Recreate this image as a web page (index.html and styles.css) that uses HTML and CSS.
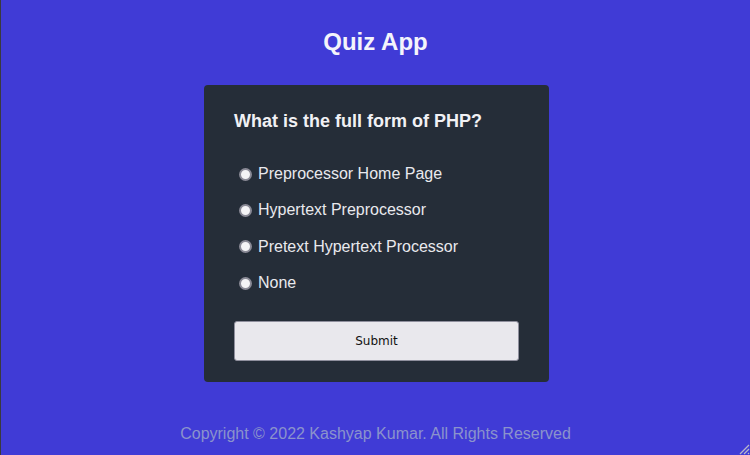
FILE: index.html
```html
<!DOCTYPE html>
<html>
<head>
<meta charset="utf-8">
<link rel="stylesheet" href="styles.css">
</head>
<body>
<div class="page">
  <h1 class="title">Quiz App</h1>
  <div class="card">
    <h2 class="question">What is the full form of PHP?</h2>
    <div class="options">
      <label class="option"><input type="radio" name="a"> Preprocessor Home Page</label>
      <label class="option"><input type="radio" name="a"> Hypertext Preprocessor</label>
      <label class="option"><input type="radio" name="a"> Pretext Hypertext Processor</label>
      <label class="option"><input type="radio" name="a"> None</label>
    </div>
    <button class="submit">Submit</button>
  </div>
  <footer class="footer">Copyright © 2022 Kashyap Kumar. All Rights Reserved</footer>
  <svg class="grip" width="12" height="12" viewBox="0 0 12 12">
    <line x1="11" y1="2" x2="2" y2="11" stroke="#b8b8c8" stroke-width="1.2"/>
    <line x1="11" y1="6" x2="6" y2="11" stroke="#b8b8c8" stroke-width="1.2"/>
    <line x1="11" y1="10" x2="10" y2="11" stroke="#b8b8c8" stroke-width="1.2"/>
  </svg>
</div>
</body>
</html>
```
FILE: styles.css
```css
html, body {
  margin: 0;
  padding: 0;
}
body {
  background: #403bd6;
  font-family: "Liberation Sans", Arial, sans-serif;
}
.page {
  position: relative;
  box-sizing: border-box;
  height: 455px;
  border-left: 1px solid #3a3a3e;
  display: flex;
  flex-direction: column;
  align-items: center;
}
.title {
  margin: 28px 0 0;
  font-size: 24px;
  line-height: 28px;
  font-weight: bold;
  color: #f4f4fb;
}
.card {
  margin-top: 29px;
  margin-left: 2px;
  width: 345px;
  box-sizing: border-box;
  background: #252d38;
  border-radius: 4px;
  padding: 25px 30px 21px 30px;
  display: flex;
  flex-direction: column;
}
.question {
  margin: 0;
  font-size: 18px;
  line-height: 22px;
  font-weight: bold;
  color: #f1f1f4;
}
.options {
  margin-top: 32px;
  display: flex;
  flex-direction: column;
  gap: 16.4px;
}
.option {
  font-size: 16px;
  line-height: 20px;
  color: #e9e9ee;
  display: flex;
  align-items: center;
}
.option input {
  appearance: none;
  -webkit-appearance: none;
  box-sizing: border-box;
  margin: 0 6px 0 5px;
  width: 13px;
  height: 13px;
  border-radius: 50%;
  border: 2px solid #8a8a96;
  background: #f4f4f6;
}
.submit {
  margin-top: 28px;
  height: 40px;
  width: 100%;
  background: #e9e8ed;
  border: 1px solid #8f8f9d;
  border-radius: 3px;
  font-family: "DejaVu Sans", sans-serif;
  font-size: 12px;
  color: #111;
}
.footer {
  margin-top: 42px;
  font-size: 16px;
  line-height: 20px;
  color: #8b93cc;
}
.grip {
  position: absolute;
  right: 0;
  bottom: 0;
}
```
